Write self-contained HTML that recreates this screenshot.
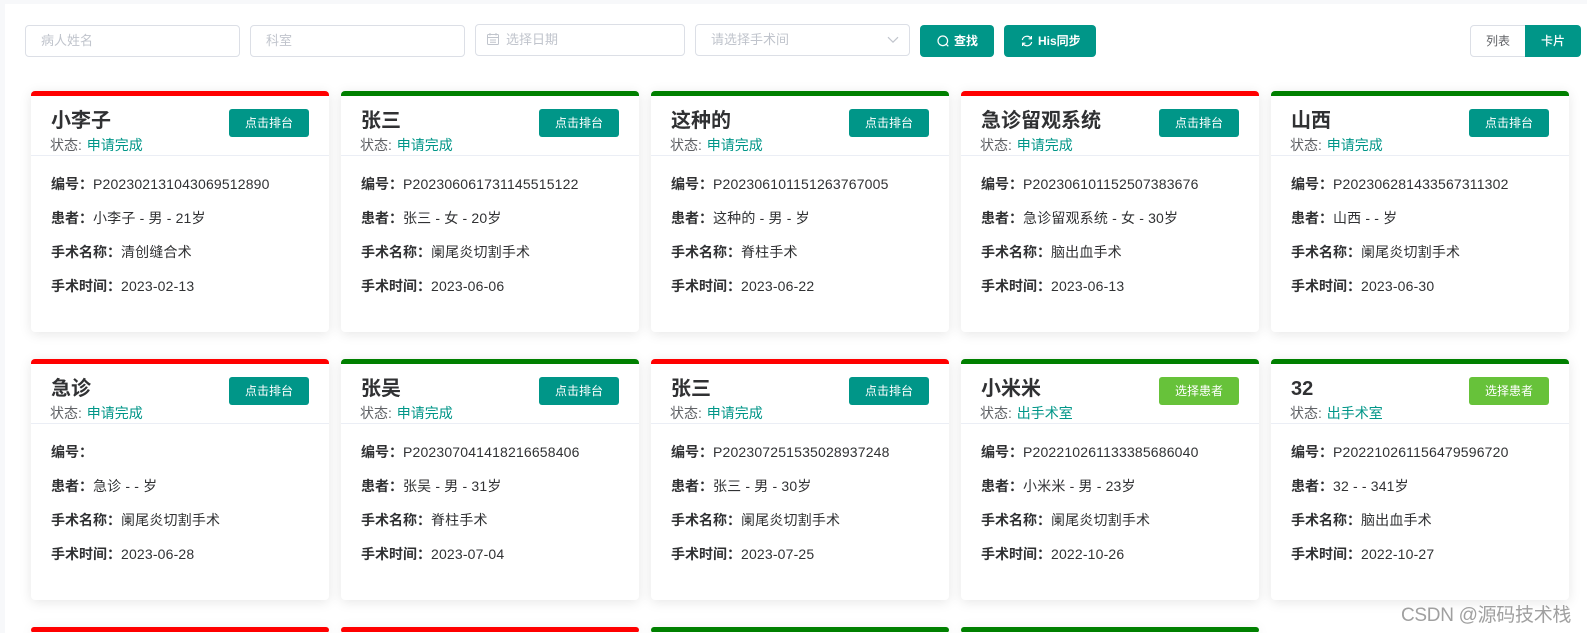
<!DOCTYPE html>
<html lang="zh-CN">
<head>
<meta charset="utf-8">
<title>手术排台</title>
<style>
*{box-sizing:border-box;margin:0;padding:0}
html,body{width:1587px;height:633px;overflow:hidden;background:#fff}
body{position:relative;font-family:"Liberation Sans","Noto Sans CJK SC",sans-serif;color:#303133;font-size:14px}
.st{position:absolute;left:0;top:0;width:1587px;height:4px;background:#f7f8fa}
.sl{position:absolute;left:0;top:0;width:5px;height:633px;background:#f7f8fa}
.in{position:absolute;height:32px;border:1px solid #dcdfe6;border-radius:4px;background:#fff;color:#c0c4cc;font-size:13px;line-height:30px;white-space:nowrap}
.b{position:absolute;top:25px;height:32px;border-radius:4px;background:#009688;color:#fff;font-size:12px;font-weight:500;line-height:32px;white-space:nowrap}
.b span{position:absolute;top:0}
.b svg{position:absolute}
.c{position:absolute;width:298px;height:241px;background:#fff;border-top:5px solid #008000;border-radius:4px;box-shadow:0 2px 12px rgba(0,0,0,.1);overflow:hidden}
.r{border-top-color:#f00}
.e{height:6px}
.t{position:absolute;left:20px;top:11px;line-height:28px;font-size:20px;font-weight:700;color:#303133;white-space:nowrap}
.s{position:absolute;left:19px;top:39px;line-height:20px;font-size:14px;color:#606266;white-space:nowrap}
.s i{font-style:normal;color:#009688;margin-left:1px}
.p{position:absolute;left:198px;top:13px;width:80px;height:28px;border-radius:3px;background:#009688;color:#fff;font-size:12px;line-height:28px;text-align:center}
.g{background:#67c23a}
.d{position:absolute;left:0;top:59px;width:298px;height:1px;background:#ebeef5}
.l{position:absolute;left:20px;line-height:20px;font-size:14px;color:#303133;white-space:nowrap;letter-spacing:.17px}
.l b{font-weight:700;letter-spacing:0}
.l1{top:78px}.l2{top:112px}.l3{top:146px}.l4{top:180px}
.wm{position:absolute;left:1401px;top:604px;line-height:24px;font-size:19px;letter-spacing:-.3px;color:#a0a0a0;white-space:nowrap;text-shadow:0 0 2px #fff}
</style>
</head>
<body>
<div class="st"></div>
<div class="sl"></div>

<div class="in" style="left:25px;top:25px;width:215px;padding-left:15px">病人姓名</div>
<div class="in" style="left:250px;top:25px;width:215px;padding-left:15px">科室</div>
<div class="in" style="left:475px;top:24px;width:210px;padding-left:30px">选择日期
<svg style="position:absolute;left:11px;top:8px" width="12" height="12" viewBox="0 0 12 12" fill="none" stroke="#c0c4cc" stroke-width="1"><rect x=".5" y="1.5" width="11" height="10" rx="1"/><path d="M.5 4.5h11M3 0v2.5M9 0v2.5M3 7h6M3 9.2h6"/></svg></div>
<div class="in" style="left:695px;top:24px;width:215px;padding-left:15px">请选择手术间
<svg style="position:absolute;left:191px;top:11px" width="12" height="8" viewBox="0 0 12 8" fill="none" stroke="#c0c4cc" stroke-width="1.2"><path d="M1 1.2l5 5 5-5"/></svg></div>

<div class="b" style="left:920px;width:74px"><svg style="left:17px;top:10px" width="12" height="12" viewBox="0 0 12 12" fill="none" stroke="#fff" stroke-width="1.2"><circle cx="5.8" cy="5.8" r="4.8"/><path d="M9.3 9.3l2 2"/></svg><span style="left:34px;font-weight:700">查找</span></div>
<div class="b" style="left:1004px;width:92px"><svg style="left:17px;top:10px" width="12" height="12" viewBox="0 0 12 12" fill="none" stroke="#fff" stroke-width="1.2"><path d="M1.3 5A4.8 4.8 0 0 1 10 3.4M10.7 7A4.8 4.8 0 0 1 2 8.6"/><path d="M10.4 1v2.8H7.6M1.6 11V8.2h2.8"/></svg><span style="left:34px;font-weight:700">His同步</span></div>

<div class="in" style="left:1470px;top:25px;width:56px;border-radius:4px 0 0 4px;font-size:12px;color:#606266;padding-left:15px">列表</div>
<div class="b" style="left:1525px;width:56px;border-radius:0 4px 4px 0"><span style="left:16px">卡片</span></div>

<!-- row 1 -->
<div class="c r" style="left:31px;top:91px"><div class="t">小李子</div><div class="s">状态: <i>申请完成</i></div><div class="p">点击排台</div><div class="d"></div>
<div class="l l1"><b>编号：</b>P202302131043069512890</div><div class="l l2"><b>患者：</b>小李子 - 男 - 21岁</div><div class="l l3"><b>手术名称：</b>清创缝合术</div><div class="l l4"><b>手术时间：</b>2023-02-13</div></div>

<div class="c" style="left:341px;top:91px"><div class="t">张三</div><div class="s">状态: <i>申请完成</i></div><div class="p">点击排台</div><div class="d"></div>
<div class="l l1"><b>编号：</b>P202306061731145515122</div><div class="l l2"><b>患者：</b>张三 - 女 - 20岁</div><div class="l l3"><b>手术名称：</b>阑尾炎切割手术</div><div class="l l4"><b>手术时间：</b>2023-06-06</div></div>

<div class="c" style="left:651px;top:91px"><div class="t">这种的</div><div class="s">状态: <i>申请完成</i></div><div class="p">点击排台</div><div class="d"></div>
<div class="l l1"><b>编号：</b>P202306101151263767005</div><div class="l l2"><b>患者：</b>这种的 - 男 - 岁</div><div class="l l3"><b>手术名称：</b>脊柱手术</div><div class="l l4"><b>手术时间：</b>2023-06-22</div></div>

<div class="c r" style="left:961px;top:91px"><div class="t">急诊留观系统</div><div class="s">状态: <i>申请完成</i></div><div class="p">点击排台</div><div class="d"></div>
<div class="l l1"><b>编号：</b>P202306101152507383676</div><div class="l l2"><b>患者：</b>急诊留观系统 - 女 - 30岁</div><div class="l l3"><b>手术名称：</b>脑出血手术</div><div class="l l4"><b>手术时间：</b>2023-06-13</div></div>

<div class="c" style="left:1271px;top:91px"><div class="t">山西</div><div class="s">状态: <i>申请完成</i></div><div class="p">点击排台</div><div class="d"></div>
<div class="l l1"><b>编号：</b>P202306281433567311302</div><div class="l l2"><b>患者：</b>山西 - - 岁</div><div class="l l3"><b>手术名称：</b>阑尾炎切割手术</div><div class="l l4"><b>手术时间：</b>2023-06-30</div></div>

<!-- row 2 -->
<div class="c r" style="left:31px;top:359px"><div class="t">急诊</div><div class="s">状态: <i>申请完成</i></div><div class="p">点击排台</div><div class="d"></div>
<div class="l l1"><b>编号：</b></div><div class="l l2"><b>患者：</b>急诊 - - 岁</div><div class="l l3"><b>手术名称：</b>阑尾炎切割手术</div><div class="l l4"><b>手术时间：</b>2023-06-28</div></div>

<div class="c" style="left:341px;top:359px"><div class="t">张吴</div><div class="s">状态: <i>申请完成</i></div><div class="p">点击排台</div><div class="d"></div>
<div class="l l1"><b>编号：</b>P202307041418216658406</div><div class="l l2"><b>患者：</b>张吴 - 男 - 31岁</div><div class="l l3"><b>手术名称：</b>脊柱手术</div><div class="l l4"><b>手术时间：</b>2023-07-04</div></div>

<div class="c r" style="left:651px;top:359px"><div class="t">张三</div><div class="s">状态: <i>申请完成</i></div><div class="p">点击排台</div><div class="d"></div>
<div class="l l1"><b>编号：</b>P202307251535028937248</div><div class="l l2"><b>患者：</b>张三 - 男 - 30岁</div><div class="l l3"><b>手术名称：</b>阑尾炎切割手术</div><div class="l l4"><b>手术时间：</b>2023-07-25</div></div>

<div class="c" style="left:961px;top:359px"><div class="t">小米米</div><div class="s">状态: <i>出手术室</i></div><div class="p g">选择患者</div><div class="d"></div>
<div class="l l1"><b>编号：</b>P202210261133385686040</div><div class="l l2"><b>患者：</b>小米米 - 男 - 23岁</div><div class="l l3"><b>手术名称：</b>阑尾炎切割手术</div><div class="l l4"><b>手术时间：</b>2022-10-26</div></div>

<div class="c" style="left:1271px;top:359px"><div class="t">32</div><div class="s">状态: <i>出手术室</i></div><div class="p g">选择患者</div><div class="d"></div>
<div class="l l1"><b>编号：</b>P202210261156479596720</div><div class="l l2"><b>患者：</b>32 - - 341岁</div><div class="l l3"><b>手术名称：</b>脑出血手术</div><div class="l l4"><b>手术时间：</b>2022-10-27</div></div>

<!-- row 3 -->
<div class="c r e" style="left:31px;top:627px"></div>
<div class="c r e" style="left:341px;top:627px"></div>
<div class="c e" style="left:651px;top:627px"></div>
<div class="c e" style="left:961px;top:627px"></div>

<div class="wm">CSDN @源码技术栈</div>
</body>
</html>
